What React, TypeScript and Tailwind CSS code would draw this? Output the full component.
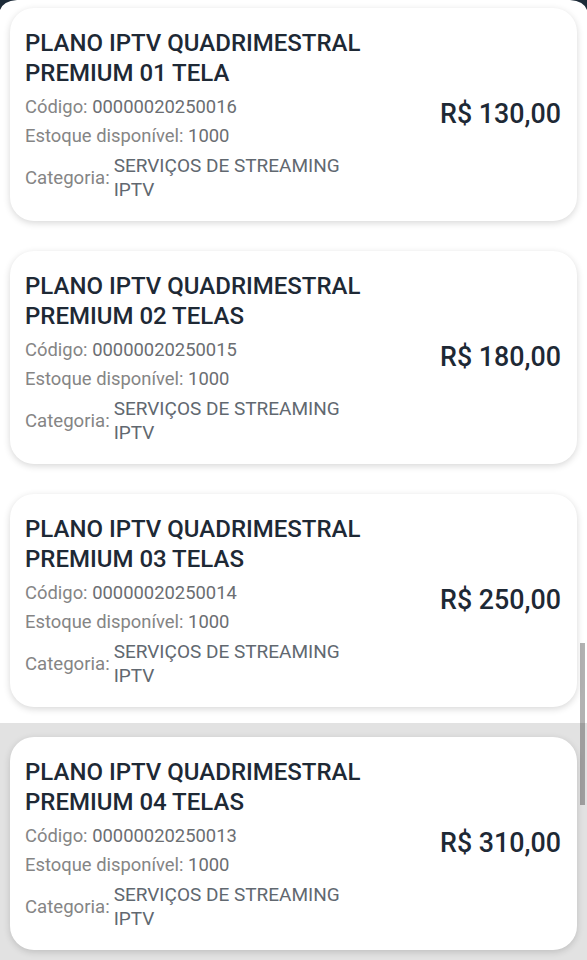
import React from "react";

type Plano = {
  nome: string;
  codigo: string;
  estoque: string;
  preco: string;
};

const planos: Plano[] = [
  { nome: "PLANO IPTV QUADRIMESTRAL PREMIUM 01 TELA", codigo: "00000020250016", estoque: "1000", preco: "R$ 130,00" },
  { nome: "PLANO IPTV QUADRIMESTRAL PREMIUM 02 TELAS", codigo: "00000020250015", estoque: "1000", preco: "R$ 180,00" },
  { nome: "PLANO IPTV QUADRIMESTRAL PREMIUM 03 TELAS", codigo: "00000020250014", estoque: "1000", preco: "R$ 250,00" },
  { nome: "PLANO IPTV QUADRIMESTRAL PREMIUM 04 TELAS", codigo: "00000020250013", estoque: "1000", preco: "R$ 310,00" },
];

function PlanoCard({ plano, pressed }: { plano: Plano; pressed?: boolean }) {
  return (
    <div className={`px-[10px] pt-[14px] pb-[16px] ${pressed ? "bg-[#e2e2e2]" : "bg-white"}`}>
      <div className="flex h-[213px] items-center rounded-[24px] bg-white pl-[15px] pr-[16px] shadow-[0_2px_7px_rgba(0,0,0,0.16)]">
        <div className="flex-1">
          <h3 className="w-[380px] text-[24px] font-medium leading-[30px] text-[#1e2935]">{plano.nome}</h3>
          <p className="mt-[4px] text-[18.4px] leading-[29px] text-[#858585]">
            Código: <span className="text-[#6b6e72]">{plano.codigo}</span>
          </p>
          <p className="text-[18.4px] leading-[29px] text-[#858585]">
            Estoque disponível: <span className="text-[#6b6e72]">{plano.estoque}</span>
          </p>
          <div className="mt-[4px] flex items-center">
            <span className="text-[18.6px] leading-[24px] text-[#858585]">Categoria:</span>
            <span className="ml-[4px] text-[19px] leading-[24px] text-[#616870]">
              SERVIÇOS DE STREAMING
              <br />
              IPTV
            </span>
          </div>
        </div>
        <div className="text-[26.8px] font-medium text-[#1e2935]">{plano.preco}</div>
      </div>
    </div>
  );
}

export default function App() {
  return (
    <div
      className="relative h-[960px] w-[587px] overflow-hidden bg-white"
      style={{ fontFamily: "Roboto, 'Noto Sans', sans-serif" }}
    >
      <div className="-mt-[6px]">
        {planos.map((p, i) => (
          <PlanoCard key={p.codigo} plano={p} pressed={i === 3} />
        ))}
      </div>

      {/* screen corners */}
      <svg className="absolute left-0 top-0" width="20" height="14" viewBox="0 0 20 14">
        <path d="M0 0 H17 Q3 1 0 10 Z" fill="#1d2b38" />
      </svg>
      <svg className="absolute right-0 top-0" width="20" height="14" viewBox="0 0 20 14">
        <path d="M20 0 H3 Q17 1 20 10 Z" fill="#1d2b38" />
      </svg>

      {/* scrollbar */}
      <div className="absolute right-[2px] top-[643px] h-[162px] w-[5px] bg-black/30" />
    </div>
  );
}
